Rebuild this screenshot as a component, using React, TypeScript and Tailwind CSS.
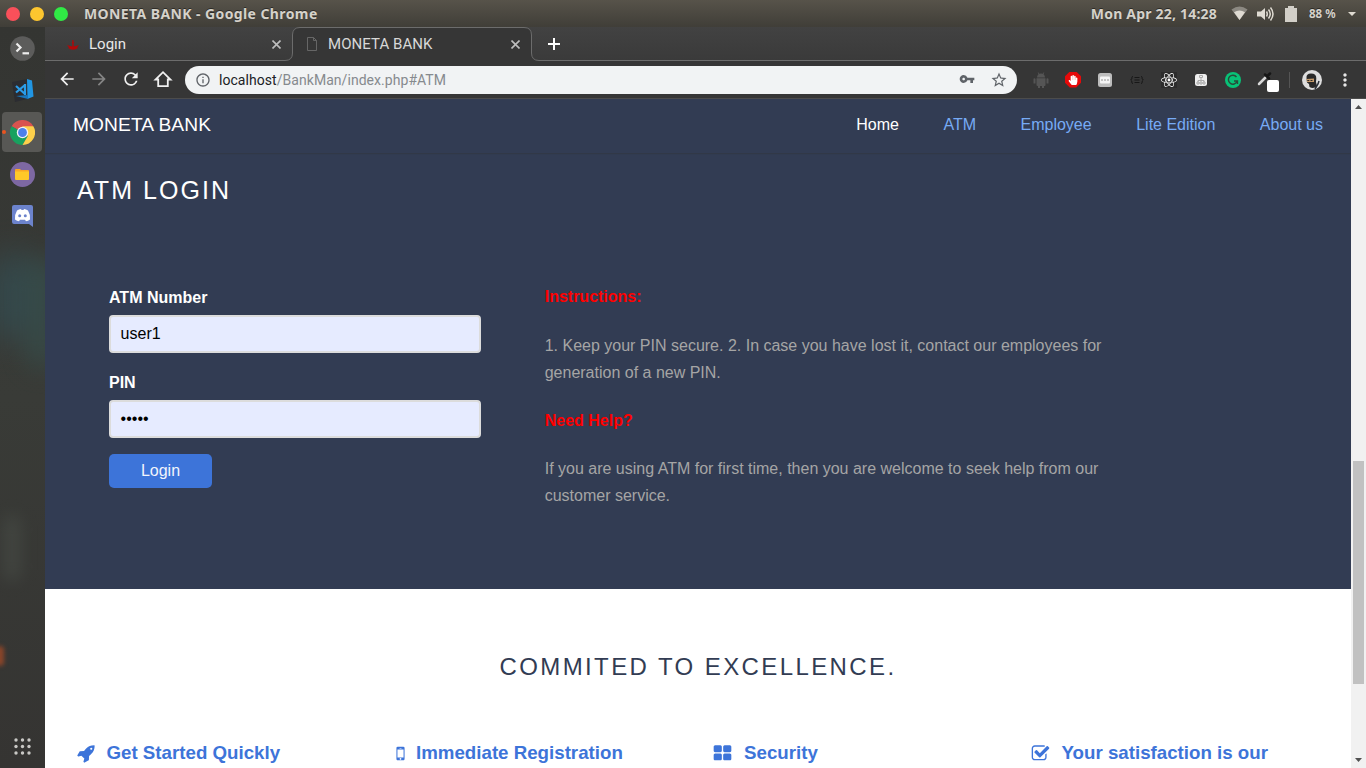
import React from "react";
import { MdArrowBack, MdArrowForward, MdRefresh, MdInfoOutline, MdVpnKey, MdStarBorder, MdMoreVert } from "react-icons/md";
import { FaHandPaper, FaReact } from "react-icons/fa";

const FA = {
  rocket:
    "M1440 448q0-40-28-68t-68-28-68 28-28 68 28 68 68 28 68-28 28-68zm224-288q0 249-75.5 430.5t-253.5 360.5q-81 80-195 176l-20 379q-2 16-16 26l-384 224q-7 4-16 4-12 0-23-9l-64-64q-13-14-8-32l85-276-281-281-276 85q-3 1-9 1-14 0-23-9l-64-64q-17-19-5-39l224-384q10-14 26-16l379-20q96-114 176-195 188-187 358-258t431-71q14 0 24 9.5t10 22.5z",
  mobile:
    "M976 1408q0-33-23.5-56.5t-56.5-23.5-56.5 23.5-23.5 56.5 23.5 56.5 56.5 23.5 56.5-23.5 23.5-56.5zm208-160v-704q0-13-9.5-22.5t-22.5-9.5h-512q-13 0-22.5 9.5t-9.5 22.5v704q0 13 9.5 22.5t22.5 9.5h512q13 0 22.5-9.5t9.5-22.5zm-192-848q0-16-16-16h-160q-16 0-16 16t16 16h160q16 0 16-16zm288-16v1024q0 52-38 90t-90 38h-512q-52 0-90-38t-38-90v-1024q0-52 38-90t90-38h512q52 0 90 38t38 90z",
  grid: "M832 1024v384q0 52-38 90t-90 38h-512q-52 0-90-38t-38-90v-384q0-52 38-90t90-38h512q52 0 90 38t38 90zm0-768v384q0 52-38 90t-90 38h-512q-52 0-90-38t-38-90v-384q0-52 38-90t90-38h512q52 0 90 38t38 90zm896 768v384q0 52-38 90t-90 38h-512q-52 0-90-38t-38-90v-384q0-52 38-90t90-38h512q52 0 90 38t38 90zm0-768v384q0 52-38 90t-90 38h-512q-52 0-90-38t-38-90v-384q0-52 38-90t90-38h512q52 0 90 38t38 90z",
  check:
    "M1472 930v318q0 119-84.5 203.5t-203.5 84.5h-832q-119 0-203.5-84.5t-84.5-203.5v-832q0-119 84.5-203.5t203.5-84.5h832q63 0 117 25 15 7 18 23 3 17-9 29l-49 49q-10 10-23 10-3 0-9-2-23-6-45-6h-832q-66 0-113 47t-47 113v832q0 66 47 113t113 47h832q66 0 113-47t47-113v-254q0-13 9-22l64-64q10-10 23-10 6 0 12 3 20 8 20 29zm231-489l-814 814q-24 24-57 24t-57-24l-430-430q-24-24-24-57t24-57l110-110q24-24 57-24t57 24l263 263 647-647q24-24 57-24t57 24l110 110q24 24 24 57t-24 57z",
};

function TitleBar() {
  return (
    <header className="flex h-[27px] shrink-0 items-center bg-linear-to-b from-[#57534a] to-[#403e38] font-['Noto_Sans'] font-bold text-[#d5d2ca] [text-shadow:0_-1px_0_#2d2b27]">
      <div className="flex gap-[10px] pl-[6px]">
        <i className="size-[14px] rounded-full bg-[#f9505a]" />
        <i className="size-[14px] rounded-full bg-[#fdc62f]" />
        <i className="size-[14px] rounded-full bg-[#30ea45]" />
      </div>
      <span className="ml-4 w-[240px] whitespace-nowrap text-[14px] tracking-[0.400px]">MONETA BANK - Google Chrome</span>
      <span className="-mt-px ml-auto whitespace-nowrap text-[14px] tracking-[0.200px]">Mon Apr 22, 14:28</span>
      <svg className="ml-[14px] h-[15px] w-[17px]" viewBox="0 0 17 15">
        <path d="M.5 3.500Q8.500-2.500 16.500 3.500L8.500 14Z" fill="#8c8982" />
        <path d="M3 6.200Q8.500 2.700 14 6.200L8.500 14Z" fill="#dfdbd2" />
      </svg>
      <svg className="ml-[9px] h-4 w-[18px]" viewBox="0 0 18 16" fill="none" stroke="#dfdbd2" strokeWidth="1.500">
        <path d="M0 5.500h4l4-3.500v12l-4-3.500H0z" fill="#dfdbd2" stroke="none" />
        <path d="M9.500 5.500q1.500 2.500 0 5M11.500 3.500q3.500 4.500 0 9M13.500 1.500q5 6.500 0 13" />
      </svg>
      <svg className="ml-[10px] h-4 w-3" viewBox="0 0 12 16" fill="#d2cfc8">
        <path d="M3 0h6v2h3v14H0V2h3z" />
      </svg>
      <span className="ml-3 w-[27px] whitespace-nowrap text-[11.500px]">88 %</span>
      <svg className="mr-[10px] ml-3 h-1 w-2" viewBox="0 0 8 4" fill="#dfdbd2">
        <path d="M0 0h8L4 4z" />
      </svg>
    </header>
  );
}

function Dock() {
  return (
    <aside className="relative flex w-[45px] shrink-0 flex-col items-center overflow-hidden bg-linear-to-b from-[#343532] via-[#393b37] to-[#353432] pr-px">
      <div className="absolute top-[225px] -left-3 h-[90px] w-[54px] rounded-full bg-[#33535a] opacity-60 blur-lg" />
      <div className="absolute top-[232px] left-[27px] h-[110px] w-7 rounded-full bg-[#37504d] opacity-70 blur-md" />
      <div className="absolute top-[488px] left-1 h-[66px] w-4 rounded-full bg-[#4b504a] opacity-60 blur-sm" />
      <div className="absolute top-[619px] -left-1 h-5 w-[8px] rounded-full bg-[#8b4529] blur-[2px]" />
      <div className="relative mt-px flex w-10 flex-col items-center gap-[2px]">
        <div className="flex size-10 items-center justify-center">
          <svg className="size-[25px]" viewBox="0 0 25 25">
            <circle cx="12.500" cy="12.500" r="12.300" fill="#5c5c5b" />
            <path d="M6.500 7.500l4 4-4 4" fill="none" stroke="#eee" strokeWidth="2.200" />
            <path d="M12.500 17.300h6.500" stroke="#eee" strokeWidth="2.200" />
          </svg>
        </div>
        <div className="flex size-10 items-center justify-center">
          <svg className="size-6" viewBox="0 0 24 24">
            <path d="M2 4l16-3 3 19-16 4z" fill="#2b2c31" />
            <path d="M17 1l5 1.500 1.500 16L17.500 21z" fill="#2196e3" />
            <path d="M6 18l12-1v4z" fill="#1877bd" />
            <path d="M6 8l9 8M6 14.500L15 7M15 6v11" stroke="#2b9ce8" strokeWidth="2.200" fill="none" />
          </svg>
        </div>
        <div className="relative flex size-10 items-center justify-center rounded-[4px] bg-[#585855]">
          <i className="absolute left-0 size-[4px] rounded-full bg-[#e95420]" />
          <svg className="size-[25px]" viewBox="0 0 48 48">
            <path d="M24 24L3.200 12A24 24 0 0 1 44.800 12z" fill="#d9534f" />
            <path d="M24 24L3.200 12A24 24 0 0 0 24 48l10.400-18z" fill="#18a15f" />
            <path d="M24 24l10.400 6L24 48A24 24 0 0 0 44.800 12H24z" fill="#fdd04b" />
            <circle cx="24" cy="24" r="11" fill="#f2f2f2" />
            <circle cx="24" cy="24" r="8.500" fill="#4b80ea" />
          </svg>
        </div>
        <div className="flex size-10 items-center justify-center">
          <div className="flex size-[25px] items-center justify-center rounded-full bg-[#7d68a2]">
            <svg className="h-[11px] w-[14px]" viewBox="0 0 14 11">
              <path d="M0 1q0-1 1-1h4l1 1h7q1 0 1 1v8H0z" fill="#f9a825" />
              <path d="M0 2.500h14V10q0 1-1 1H1q-1 0-1-1z" fill="#ffc928" />
            </svg>
          </div>
        </div>
        <div className="flex size-10 items-center justify-center">
          <svg className="h-[22px] w-[21px]" viewBox="0 0 21 22">
            <path d="M2 0h17q2 0 2 2v20l-4-3H2q-2 0-2-2V2q0-2 2-2z" fill="#6c83cc" />
            <path d="M5 5.500q2-1.500 4-1.500l.5 1h2l.5-1q2 0 4 1.500 2.500 4 2 9-2 1.500-4 1.700l-1-1.400H8l-1 1.400q-2-.2-4-1.700-.500-5 2-9z" fill="#fff" />
            <circle cx="7.700" cy="10.800" r="1.500" fill="#6c83cc" />
            <circle cx="13.300" cy="10.800" r="1.500" fill="#6c83cc" />
          </svg>
        </div>
      </div>
      <svg className="relative mt-auto mb-[13px] size-[17px] shrink-0" viewBox="0 0 17 17" fill="#c9c8c5">
        {[2, 8.500, 15].map((y) => [2, 8.500, 15].map((x) => <circle key={`${x}-${y}`} cx={x} cy={y} r="1.700" />))}
      </svg>
    </aside>
  );
}

function CloseMark() {
  return (
    <svg className="mr-[11px] ml-auto size-[9px]" viewBox="0 0 9 9" stroke="#bdbdbd" strokeWidth="1.600">
      <path d="M.500.500l8 8M8.500.500l-8 8" />
    </svg>
  );
}

function Tabs() {
  return (
    <div className="relative flex h-[34px] shrink-0 items-center bg-linear-to-b from-[#424242] to-[#3a3a3a] font-[Roboto] text-[15px] text-[#e8e8e8]">
      <svg className="absolute inset-0 h-[34px] w-full" viewBox="0 0 1321 34" fill="none">
        <path d="M0 34V33.500H240Q247.500 33.500 247.500 26V8Q247.500.500 255 .500H479Q486.500.500 486.500 8V26Q486.500 33.500 494 33.500H1321V34z" fill="#363636" />
        <path d="M0 33.500H240Q247.500 33.500 247.500 26V8Q247.500.500 255 .500H479Q486.500.500 486.500 8V26Q486.500 33.500 494 33.500H1321" stroke="#6c6c6c" />
      </svg>
      <div className="relative flex w-[247px] items-center pl-[22px]">
        <svg className="mt-[2px] h-[10px] w-3" viewBox="0 0 12 10" fill="#b00808">
          <path d="M5.300 0h1.200v2h1L6.700 3v3.500l2-.5 3.300-1-2 2.500 1 .500Q6 11.500 1 8l1-.500L0 5l3.300 1 2 .5V3l-.8-1h.8z" />
        </svg>
        <span className="ml-[10px]">Login</span>
        <CloseMark />
      </div>
      <div className="relative flex w-[239px] items-center pl-[15px] text-[#d8d8d8]">
        <svg className="h-[14px] w-[10px]" viewBox="0 0 10 14" fill="none" stroke="#666">
          <path d="M.500.500h6l3 3v10h-9zM6.500.500v3h3" />
        </svg>
        <span className="ml-[11px] tracking-[0.050px]">MONETA BANK</span>
        <CloseMark />
      </div>
      <svg className="relative ml-[17px] size-3" viewBox="0 0 12 12" stroke="#fff" strokeWidth="2">
        <path d="M6 0v12M0 6h12" />
      </svg>
    </div>
  );
}

function Toolbar() {
  return (
    <div className="flex h-[38px] shrink-0 items-center border-b border-[#4c4c4c] bg-[#363636] text-white">
      <div className="-mt-px flex items-center gap-3 pl-3">
        <MdArrowBack className="size-5 text-[#f0f0f0]" />
        <MdArrowForward className="size-5 text-[#858585]" />
        <MdRefresh className="size-5 text-[#f0f0f0]" />
        <svg className="size-5" viewBox="0 0 20 20" fill="none" stroke="#f0f0f0" strokeWidth="1.800">
          <path d="M2.500 10.500h2.700v6.600h9.600v-6.600h2.700L10 3.200z" />
        </svg>
      </div>
      <div className="ml-3 flex h-7 w-[832px] items-center rounded-full bg-[#f1f3f4] px-[10px] font-[Roboto] text-[14px] text-[#5f6368]">
        <MdInfoOutline className="size-4" />
        <span className="mt-px ml-2 tracking-[0.050px] text-[#868a8e]">
          <span className="text-[#202124]">localhost</span>/BankMan/index.php#ATM
        </span>
        <MdVpnKey className="-mt-px ml-auto size-4" />
        <MdStarBorder className="mr-[-1px] ml-[15px] size-[18px]" />
      </div>
      <div className="ml-4 flex items-center gap-4">
        <svg className="size-4" viewBox="0 0 16 16" fill="#555">
          <path d="M4 5.500a4 4 0 0 1 1.500-3.300L4.700.5l.5-.3 1 1.600a5 5 0 0 1 3.600 0l1-1.600.5.3-.8 1.700A4 4 0 0 1 12 5.500zM3.500 6.300h9V13q0 1-1 1H11v2H9v-2H7v2H5v-2h-.500q-1 0-1-1zM.5 7q0-.8.900-.8T2.500 7v4.500H.5zM13.500 7q0-.8.900-.8t1.100.8v4.500h-2z" />
        </svg>
        <div className="flex size-4 items-center justify-center bg-[#e60a0a] [clip-path:polygon(30%_0,70%_0,100%_30%,100%_70%,70%_100%,30%_100%,0_70%,0_30%)]">
          <FaHandPaper className="size-[10px]" />
        </div>
        <svg className="size-4" viewBox="0 0 16 16">
          <rect x="1" y="1" width="14" height="14" rx="2.500" fill="#bdbdbd" />
          <rect x="3" y="4.500" width="10" height="7" rx="1" fill="#f5f5f5" />
          <path d="M4 8h8" stroke="#c4c4c4" strokeWidth="2" strokeDasharray="2 1" />
        </svg>
        <svg className="size-4" viewBox="0 0 16 16" fill="none" stroke="#171717">
          <path d="M4 4.500Q2.800 4.500 2.800 5.700v1.200L1.700 8l1.100 1.100v1.200q0 1.200 1.200 1.200M12 4.500q1.200 0 1.200 1.200v1.200L14.300 8l-1.100 1.100v1.200q0 1.200-1.200 1.200M5.500 5.500h5M5.500 8h5M5.500 10.500h5" />
        </svg>
        <FaReact className="size-4 bg-[#2c2c2c]" />
        <svg className="size-4" viewBox="0 0 16 16" fill="none" stroke="#aaa">
          <rect x="2" y="2" width="12" height="12" rx="2.500" fill="#efefef" stroke="none" />
          <path d="M8 5.500v4M5 10V8.500h6V10M6.500 3.500h3v2h-3zM4 10h2v2H4zM7 10h2v2H7zM10 10h2v2h-2z" />
        </svg>
        <svg className="size-4" viewBox="0 0 16 16" fill="none">
          <circle cx="8" cy="8" r="8" fill="#08c277" />
          <path d="M11.500 5A4.500 4.500 0 1 0 12 9.500M9 9h3.500v3" stroke="#294b3a" strokeWidth="1.400" />
        </svg>
        <svg className="mt-[5px] h-[22px] w-[22px]" viewBox="0 0 22 22">
          <path d="M2 13L8.500 6.500" stroke="#d8d8d8" strokeWidth="2.500" strokeLinecap="round" />
          <path d="M8 3.500l4 4M10 5.500L13 2.500" stroke="#161616" strokeWidth="2.500" strokeLinecap="round" />
          <rect x="10" y="9" width="12" height="12" rx="2" fill="#fff" />
        </svg>
      </div>
      <i className="ml-[10px] h-4 w-px bg-[#555]" />
      <svg className="ml-3 size-5" viewBox="0 0 20 20">
        <circle cx="10" cy="10" r="10" fill="#dedede" />
        <path d="M4.500 8Q4 3.500 9 3.500q5.500 0 5.300 5L14 12l1 4q-3.500 3.500-7.500 1L7 14l-2-1.500z" fill="#292929" />
        <path d="M4.500 9l7.500-.5V12L5 12z" fill="#c69b6b" />
        <path d="M5.300 10.500h2M8.500 10.500h2" stroke="#292929" />
        <path d="M13 19l3-5 1-3" stroke="#292f38" strokeWidth="1.500" fill="none" />
      </svg>
      <MdMoreVert className="ml-[13px] size-5 shrink-0 text-[#e6e6e6]" />
    </div>
  );
}

function AtmPage() {
  return (
    <div className="flex flex-1 flex-col overflow-hidden bg-white font-['Liberation_Sans',sans-serif] text-[16px]">
      <section className="h-[490px] shrink-0 bg-[#323c53]">
        <nav className="flex h-[54px] items-center pr-7 pb-[2px] pl-7 shadow-[0_1px_1px_rgba(48,50,55,0.4)]">
          <span className="text-[19.200px] tracking-[0.080px] text-white">MONETA BANK</span>
          <div className="ml-auto flex gap-[44.500px] text-[#77abf5]">
            <a className="text-white">Home</a>
            <a>ATM</a>
            <a>Employee</a>
            <a>Lite Edition</a>
            <a>About us</a>
          </div>
        </nav>
        <h1 className="mt-[19px] ml-8 text-[25px] leading-9 tracking-[2.050px] text-white">ATM LOGIN</h1>
        <div className="mt-[76px] flex">
          <form className="ml-16 w-[372px]">
            <label className="block h-[31px] leading-[27px] font-bold text-white">ATM Number</label>
            <div className="flex h-[38px] items-center rounded-[4px] border-2 border-[#dcdcdc] bg-[#e6ebff] px-[9.600px] text-black">user1</div>
            <label className="mt-4 block h-[31px] leading-[27px] font-bold text-white">PIN</label>
            <div className="flex h-[38px] items-center rounded-[4px] border-2 border-[#dcdcdc] bg-[#e6ebff] px-[9.600px] text-black">•••••</div>
            <button type="button" className="mt-4 h-[34px] w-[103px] rounded-[5px] bg-[#3d74d9] text-[#f2f5fc]">Login</button>
          </form>
          <div className="ml-[63.700px] w-[580px] leading-[27px] text-[#a5a5a5]">
            <p className="-mt-px font-bold text-[#f00]">Instructions:</p>
            <p className="mt-[22px]">1. Keep your PIN secure. 2. In case you have lost it, contact our employees for generation of a new PIN.</p>
            <p className="mt-[21px] font-bold text-[#f00]">Need Help?</p>
            <p className="mt-[21px]">If you are using ATM for first time, then you are welcome to seek help from our customer service.</p>
          </div>
        </div>
      </section>
      <section>
        <h2 className="mt-[60px] text-center text-[24px] leading-9 tracking-[2.400px] text-[#323c53]">COMMITED TO EXCELLENCE.</h2>
        <div className="mt-[56px] grid w-[1306px] grid-cols-4 pl-8 text-[18.720px] leading-6 font-bold whitespace-nowrap text-[#3d74d9]">
          <div className="flex items-center">
            <svg className="-mr-px size-[19px] shrink-0" viewBox="0 0 1792 1792" fill="currentColor"><path d={FA.rocket} /></svg>
            <span className="ml-[11.500px]">Get Started Quickly</span>
          </div>
          <div className="flex items-center">
            <svg className="-ml-[5px] size-[19px] shrink-0" viewBox="0 0 1792 1792" fill="currentColor"><path d={FA.mobile} /></svg>
            <span className="ml-[6.500px]">Immediate Registration</span>
          </div>
          <div className="flex items-center">
            <svg className="-ml-px size-[19px] shrink-0" viewBox="0 0 1792 1792" fill="currentColor"><path d={FA.grid} /></svg>
            <span className="ml-3">Security</span>
          </div>
          <div className="flex items-center">
            <svg className="-ml-[2px] size-[19px] shrink-0" viewBox="0 0 1792 1792" fill="currentColor"><path d={FA.check} /></svg>
            <span className="ml-3">Your satisfaction is our</span>
          </div>
        </div>
      </section>
    </div>
  );
}

export default function App() {
  return (
    <div className="flex h-screen w-screen flex-col overflow-hidden">
      <TitleBar />
      <div className="flex min-h-0 flex-1">
        <Dock />
        <main className="flex min-w-0 flex-1 flex-col">
          <Tabs />
          <Toolbar />
          <div className="flex min-h-0 flex-1">
            <AtmPage />
            <div className="flex w-[15px] shrink-0 flex-col items-center bg-[#f1f1f1]">
              <svg className="mt-[6px] h-1 w-[7px] shrink-0" viewBox="0 0 7 4" fill="#505050"><path d="M0 4h7L3.500 0z" /></svg>
              <i className="mt-[352px] h-[223px] w-[11px] bg-[#c1c1c1]" />
              <svg className="mt-auto mb-[6px] h-1 w-[7px] shrink-0" viewBox="0 0 7 4" fill="#505050"><path d="M0 0h7L3.500 4z" /></svg>
            </div>
          </div>
        </main>
      </div>
    </div>
  );
}
